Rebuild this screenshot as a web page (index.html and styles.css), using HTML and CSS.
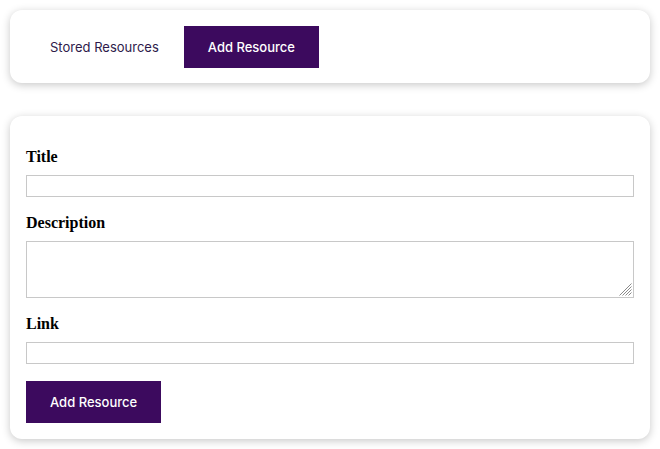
FILE: index.html
```html
<!DOCTYPE html>
<html>
<head>
<meta charset="utf-8">
<link rel="stylesheet" href="styles.css">
</head>
<body>
<div class="page">
  <nav class="card nav">
    <button class="tab">Stored Resources</button>
    <button class="tab active">Add Resource</button>
  </nav>
  <form class="card form">
    <label class="label first">Title</label>
    <input class="field" type="text">
    <label class="label">Description</label>
    <div class="area-wrap">
      <textarea class="field area"></textarea>
      <svg class="grip" width="13" height="13" viewBox="0 0 13 13">
        <path d="M12.5 0.5 L0.5 12.5 M12.5 3.5 L3.5 12.5 M12.5 6.5 L6.5 12.5 M12.5 9.5 L9.5 12.5" stroke="#8a8a8a" stroke-width="1" fill="none"/>
      </svg>
    </div>
    <label class="label">Link</label>
    <input class="field" type="text">
    <button class="submit" type="button">Add Resource</button>
  </form>
</div>
</body>
</html>
```
FILE: styles.css
```css
html, body {
  margin: 0;
  padding: 0;
  background: #ffffff;
}
.page {
  padding: 10px;
  display: flex;
  flex-direction: column;
  gap: 33px;
  font-family: "Liberation Serif", serif;
}
.card {
  background: #fff;
  border-radius: 12px;
  box-shadow: 0 2px 8px rgba(0, 0, 0, 0.22);
}
.nav {
  display: flex;
  padding: 16px 16px 15px 16px;
}
.tab {
  height: 42px;
  padding: 0 24px;
  border: none;
  background: transparent;
  font-family: Inter, "Noto Sans", sans-serif;
  font-size: 13px;
  color: #2e1a4a;
  cursor: pointer;
}
.tab.active, .submit {
  background: #3c0a5e;
  color: #fff;
  font-weight: 500;
}
.tab.active {
  margin-left: 1px;
}
.form {
  display: flex;
  flex-direction: column;
  padding: 16px;
}
.label {
  display: block;
  font-family: "Liberation Serif", serif;
  font-weight: bold;
  font-size: 16px;
  line-height: 18px;
  color: #000;
  margin: 17px 0 9px;
}
.label.first {
  margin-top: 16px;
}
.field {
  box-sizing: border-box;
  width: 100%;
  height: 22px;
  border: 1px solid #c8c8c8;
  margin: 0;
  padding: 2px 4px;
  font-size: 13px;
}
.area-wrap {
  position: relative;
}
.area {
  height: 57px;
  display: block;
  resize: none;
}
.grip {
  position: absolute;
  right: 2px;
  bottom: 2px;
}
.submit {
  align-self: flex-start;
  margin-top: 17px;
  height: 42px;
  padding: 0 24px;
  border: none;
  font-family: Inter, "Noto Sans", sans-serif;
  font-size: 13px;
}
```
